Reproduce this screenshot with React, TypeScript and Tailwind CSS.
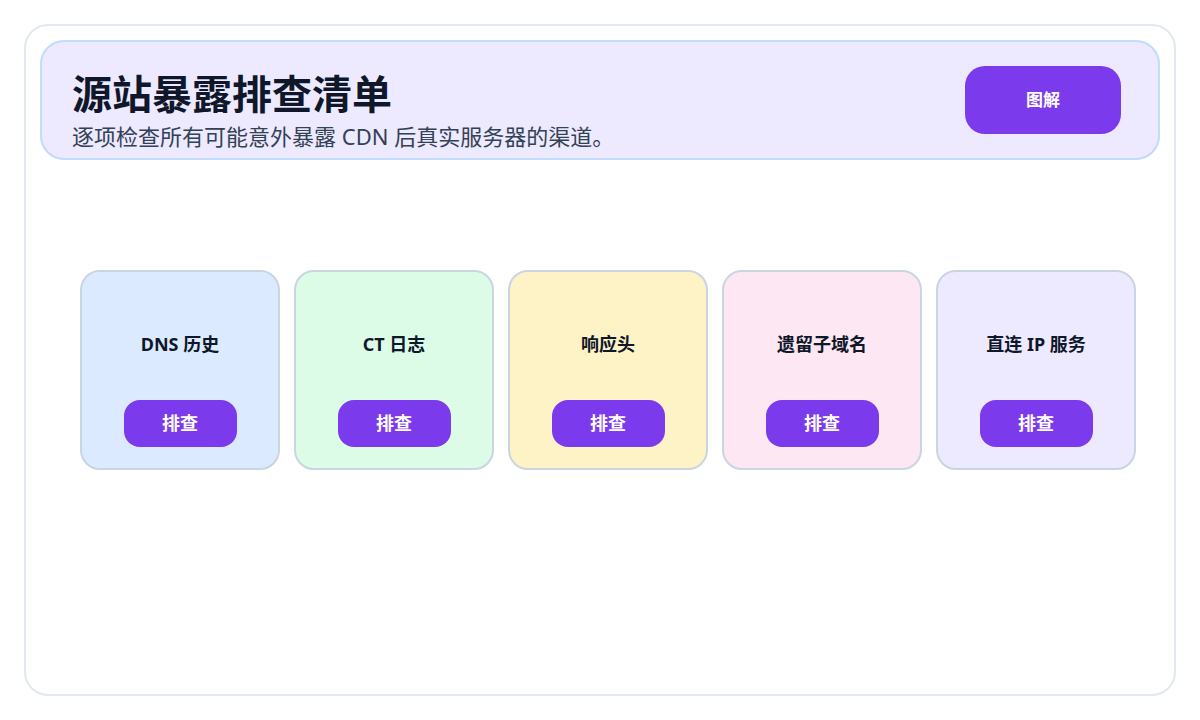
import React from "react";

const CHECKS = [
  { label: "DNS 历史", bg: "bg-[#dbeafe]" },
  { label: "CT 日志", bg: "bg-[#dcfce7]" },
  { label: "响应头", bg: "bg-[#fef3c7]" },
  { label: "遗留子域名", bg: "bg-[#fce7f3]" },
  { label: "直连 IP 服务", bg: "bg-[#ede9fe]" },
];

const FONT = "font-['Noto_Sans','Noto_Sans_CJK_SC',sans-serif]";

export default function App() {
  return (
    <div className={`w-[1200px] h-[720px] bg-white p-6 ${FONT}`}>
      <div className="h-full rounded-3xl border-2 border-[#e2e8f0] bg-white p-[14px]">
        <header className="flex items-center justify-between rounded-3xl border-2 border-[#bfdbfe] bg-[#ede9fe] pl-[30px] pr-[37px] h-[120px]">
          <div className="pt-[20px]">
            <h1 className="text-[40px] leading-[48px] font-bold text-[#0f172a]">源站暴露排查清单</h1>
            <p className="text-[22px] leading-[28px] text-[#334155] mt-[4px]">
              逐项检查所有可能意外暴露 CDN 后真实服务器的渠道。
            </p>
          </div>
          <button className="w-[156px] h-[68px] rounded-[20px] bg-[#7c3aed] text-white text-[17px] font-bold">
            图解
          </button>
        </header>

        <div className="flex gap-[14px] pl-10 mt-[110px]">
          {CHECKS.map((c) => (
            <div
              key={c.label}
              className={`w-[200px] h-[200px] rounded-[20px] border-2 border-[#cbd5e1] ${c.bg} flex flex-col items-center pt-[58px]`}
            >
              <div className="text-[18px] leading-[28px] font-bold text-[#0f172a]">{c.label}</div>
              <button className="mt-[42px] w-[113px] h-[47px] rounded-2xl bg-[#7c3aed] text-white text-[18px] font-bold">
                排查
              </button>
            </div>
          ))}
        </div>
      </div>
    </div>
  );
}
